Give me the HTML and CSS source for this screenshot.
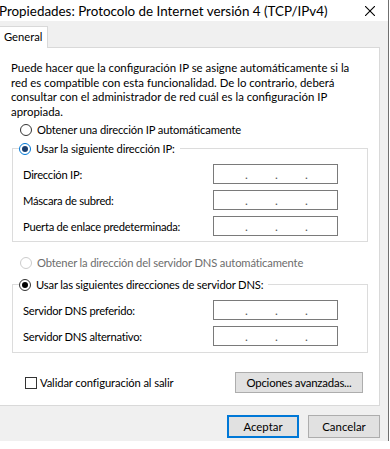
FILE: index.html
```html
<!DOCTYPE html>
<html lang="es">

<head>
    <meta charset="UTF-8">
    <meta name="viewport" content="width=device-width, initial-scale=1.0">
    <title>Propiedades: Protocolo de Internet versión 4 (TCP/IPv4)</title>
    <link rel="stylesheet" href="styles.css">
</head>

<body>
    <div class="window">
        <div class="titlebar">
            <span class="title">Propiedades: Protocolo de Internet versión 4 (TCP/IPv4)</span>
            <span class="close">
                <svg width="10" height="10" viewBox="0 0 10 10">
                    <path d="M0 0L10 10M10 0L0 10" stroke="#000" stroke-width="1.1" fill="none" />
                </svg>
            </span>
        </div>
        <div class="content">
            <div class="tabs">
                <div class="tab">General</div>
            </div>
            <div class="panel">
                <p class="intro">Puede hacer que la configuración IP se asigne automáticamente si la<br>red es compatible con esta funcionalidad. De lo contrario, deberá<br>consultar con el administrador de red cuál es la configuración IP<br>apropiada.</p>

                <label class="option"><span class="radio"></span>Obtener una dirección IP automáticamente</label>
                <fieldset class="group">
                    <legend><label class="option"><span class="radio checked focus"></span>Usar la siguiente dirección IP:</label></legend>
                    <div class="field"><span class="label">Dirección IP:</span><span class="ip"><i>.</i><i>.</i><i>.</i></span></div>
                    <div class="field"><span class="label">Máscara de subred:</span><span class="ip"><i>.</i><i>.</i><i>.</i></span></div>
                    <div class="field"><span class="label">Puerta de enlace predeterminada:</span><span class="ip"><i>.</i><i>.</i><i>.</i></span></div>
                </fieldset>

                <label class="option dns disabled"><span class="radio"></span>Obtener la dirección del servidor DNS automáticamente</label>
                <fieldset class="group dns-group">
                    <legend><label class="option"><span class="radio checked"></span>Usar las siguientes direcciones de servidor DNS:</label></legend>
                    <div class="field"><span class="label">Servidor DNS preferido:</span><span class="ip"><i>.</i><i>.</i><i>.</i></span></div>
                    <div class="field"><span class="label">Servidor DNS alternativo:</span><span class="ip"><i>.</i><i>.</i><i>.</i></span></div>
                </fieldset>

                <div class="panel-foot">
                    <label class="check"><span class="box"></span>Validar configuración al salir</label>
                    <button class="btn advanced">Opciones avanzadas...</button>
                </div>
            </div>
            <div class="actions">
                <button class="btn default">Aceptar</button>
                <button class="btn">Cancelar</button>
            </div>
        </div>
    </div>
</body>

</html>
```

FILE: styles.css
```css
body {
    margin: 0;
    background-color: #ffffff;
    font-family: "Segoe UI", Lato, "Noto Sans", sans-serif;
    font-size: 11.2px;
    color: #000000;
}

.window {
    width: 388px;
    height: 441px;
    border-right: 1px solid #6f6f6f;
    background-color: #f0f0f0;
    overflow: hidden;
}

/* barra de titulo */
.titlebar {
    height: 21px;
    background-color: #ffffff;
    display: flex;
    align-items: center;
    justify-content: space-between;
}

.title {
    margin-left: -1px;
    font-size: 13.4px;
    line-height: 16px;
    white-space: nowrap;
}

.close {
    display: flex;
    margin-right: 13px;
}

.content {
    padding-right: 8px;
}

.tabs {
    display: flex;
    padding-top: 5px;
}

.tab {
    position: relative;
    width: 43px;
    height: 21px;
    line-height: 20px;
    padding-left: 4px;
    background-color: #ffffff;
    border: 1px solid #d9d9d9;
    border-left: none;
    border-bottom: none;
    margin-bottom: -1px;
}

.panel {
    height: 357px;
    background-color: #ffffff;
    border: 1px solid #d9d9d9;
    border-left: none;
}

.intro {
    margin: 13px 0 0 11px;
    line-height: 14.5px;
    font-size: 11.4px;
    white-space: nowrap;
}

/* radios y checkbox */
.option {
    display: flex;
    align-items: center;
    height: 15px;
    line-height: 15px;
    letter-spacing: -0.15px;
    white-space: nowrap;
}

.panel > .option {
    margin-top: 3px;
    padding-left: 20px;
}

.radio {
    box-sizing: border-box;
    width: 12px;
    height: 12px;
    margin-right: 5px;
    border: 1px solid #333333;
    border-radius: 50%;
    display: flex;
    align-items: center;
    justify-content: center;
    flex-shrink: 0;
}

.radio.checked::after {
    content: "";
    width: 6px;
    height: 6px;
    border-radius: 50%;
    background-color: #000000;
}

.radio.focus {
    border-color: #0078d7;
}

.radio.focus::after {
    background-color: #1a3e6e;
}

.disabled {
    color: #6d6d6d;
}

.disabled .radio {
    border-color: #cccccc;
}

.panel > .option.dns {
    margin-top: 13px;
}

.group {
    width: 356px;
    box-sizing: border-box;
    margin: 4px 0 0 12px;
    padding: 8px 29px 5px 10px;
    border: 1px solid #dcdcdc;
    min-width: 0;
}

.group legend {
    margin-left: -4px;
    padding: 0 5px 0 0;
}

.dns-group {
    margin-top: 7px;
    padding-top: 8px;
    padding-bottom: 6px;
}

.field {
    display: flex;
    align-items: center;
    height: 20px;
    white-space: nowrap;
}

.field + .field {
    margin-top: 6px;
}

.label {
    width: 190px;
    letter-spacing: -0.25px;
}

.ip {
    box-sizing: border-box;
    width: 125px;
    height: 20px;
    border: 1px solid #7a7a7a;
    display: flex;
    justify-content: center;
    gap: 26px;
    padding-left: 3px;
    line-height: 20px;
    font-size: 12px;
}

.ip i {
    font-style: normal;
    width: 4px;
    color: #555555;
}

.panel-foot {
    display: flex;
    align-items: center;
    margin-top: 19px;
    padding: 0 16px 0 25px;
}

.check {
    display: flex;
    align-items: center;
    letter-spacing: -0.1px;
    white-space: nowrap;
}

.box {
    box-sizing: border-box;
    width: 12px;
    height: 12px;
    border: 1px solid #333333;
    margin-right: 3px;
}

/* botones */
.btn {
    box-sizing: border-box;
    font-family: inherit;
    font-size: 11.4px;
    color: #000000;
    background-color: #e1e1e1;
    border: 1px solid #adadad;
    padding: 0;
    height: 23px;
}

.advanced {
    margin-left: auto;
    width: 128px;
    height: 21px;
    letter-spacing: -0.2px;
}

.actions {
    display: flex;
    justify-content: flex-end;
    gap: 9px;
    padding-top: 9px;
}

.actions .btn {
    width: 72px;
}

.btn.default {
    border: 2px solid #0078d7;
}
```
